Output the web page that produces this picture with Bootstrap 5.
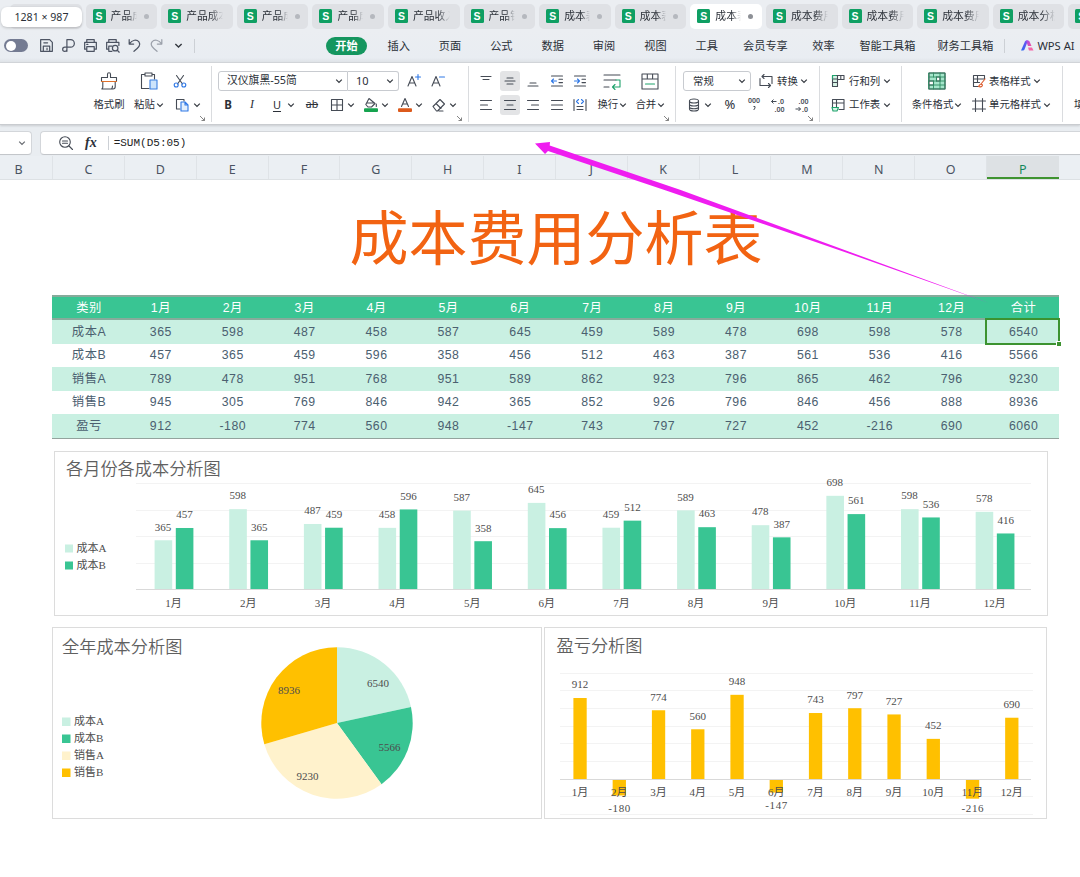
<!DOCTYPE html>
<html lang="zh-CN">
<head>
<meta charset="utf-8">
<meta name="viewport" content="width=device-width, initial-scale=1">
<title>成本费用分析表</title>
<link href="https://cdn.jsdelivr.net/npm/bootstrap@5.3.0/dist/css/bootstrap.min.css" rel="stylesheet">
<style>
  body { font-family: "Noto Sans", "Noto Sans CJK SC", sans-serif; font-size: 10.4px; line-height: 1; color: #2b3038; width: 1080px; height: 877px; overflow: hidden; background: #fff; }
  svg { display: block; flex: none; overflow: visible; }
  .ic { width: 16px; height: 16px; fill: none; stroke: #454b55; stroke-width: 1.1; stroke-linecap: round; stroke-linejoin: round; }
  .ic.big { width: 20px; height: 20px; }
  .quick .ic { stroke: #4d5463; stroke-width: 1.15; width: 17px; height: 17px; }
  .chev { width: 8px; height: 8px; fill: none; stroke: #33383f; stroke-width: 1.2; flex: none; }
  /* file tabs */
  .tabstrip { height: 30px; background: #ebeef2; padding: 4px 0 2px 10px; gap: 4px; }
  .doc { width: 71.6px; height: 24.5px; border-radius: 5px; background: #dfe1e5; padding-left: 7px; flex: none; font-size: 10.8px; }
  .doc.on { background: #fff; }
  .doc .mark-s { width: 13px; height: 14px; border-radius: 1.5px; background: #0f9f63; color: #fff; font: bold 10.5px/14px "Liberation Sans", sans-serif; text-align: center; flex: none; }
  .doc .name { width: 37px; margin-left: 5px; height: 16px; line-height: 15px; overflow: hidden; white-space: nowrap; -webkit-mask-image: linear-gradient(90deg, #000 65%, transparent 100%); mask-image: linear-gradient(90deg, #000 65%, transparent 100%); }
  .doc.mod .name { width: 26px; }
  .doc .pip { width: 5px; height: 5px; border-radius: 50%; background: #b5b8be; margin-left: 7px; }
  .doc.on .pip { background: #8d9096; }
  .sizetip { left: 1px; top: 7px; width: 81px; height: 20px; border-radius: 6px; background: #fff; box-shadow: 0 1px 3px #0003; font-size: 10.6px; z-index: 3; }
  /* menu */
  .menubar { height: 33px; background: linear-gradient(#ebeef2, #e9edf2 28px, #dfe3e7); font-size: 11.2px; border-bottom: 1px solid #d3d6da; padding-bottom: 1px; }
  .switcher { width: 24px; height: 13px; border-radius: 7px; background: #747b92; padding: 1.5px; margin-left: 4px; margin-right: 10px; }
  .switcher i { width: 10px; height: 10px; border-radius: 50%; background: #fff; display: block; }
  .quick { gap: 5px; }
  .quick .chev { margin: 0 4px; width: 9px; height: 9px; }
  .vr1 { width: 1px; height: 14px; background: #ccd0d5; }
  .home { width: 41px; height: 18px; border-radius: 9px; background: #15965f; color: #fff; font-weight: 600; margin-left: 131px; }
  .mi { width: 51.35px; text-align: center; white-space: nowrap; flex: none; }
  .mi.w66 { width: 66px; } .mi.w50 { width: 50px; } .mi.w78 { width: 78px; }
  /* ribbon */
  .ribbon { height: 62px; background: #fff; border-bottom: 1px solid #c9ccd0; box-shadow: 0 1px 2px #0002; position: relative; overflow: hidden; }
  .grp { border-right: 1px solid #dadcdf; height: 56px; margin-top: 3px; flex: none; position: relative; box-sizing: border-box; padding-top: 3px; }
  .grp.a { width: 212px; } .grp.b { width: 257px; } .grp.c { width: 207px; } .grp.d { width: 144px; } .grp.e { width: 82px; } .grp.f { width: 161px; } .grp.g { border: 0; padding-left: 11px; }
  .ln { height: 23.7px; display: flex; align-items: center; white-space: nowrap; }
  .corner { width: 5px; height: 5px; right: 6px; bottom: 1px; fill: none; stroke: #777; stroke-width: .9; }
  .g2 { margin-left: 2px; } .g3 { margin-left: 3px; } .g5 { margin-left: 5px; } .g6 { margin-left: 6px; } .g7 { margin-left: 7px; } .g8 { margin-left: 8px; } .g9 { margin-left: 9px; } .g10 { margin-left: 10px; } .g89 { margin-left: 89px; }
  .s16, .s20, .s22, .s30, .s40, .s50 { display: flex; justify-content: center; align-items: center; flex: none; }
  .s16 { width: 16px; } .s20 { width: 20px; height: 20px; } .s22 { width: 22px; } .s30 { width: 30px; } .s40 { width: 40px; } .s50 { width: 50px; }
  .s30 .chev, .s40 .chev, .s50 .chev { margin-left: 1px; }
  .s20.press { background: #e3e4e6; border-radius: 3px; }
  .aligns { gap: 3.6px; margin-left: 7px; }
  .pick { height: 20px; border: 1px solid #c8cbd0; border-radius: 3px; padding: 0 4px 0 8px; }
  .pick.fam { width: 130px; border-radius: 3px 0 0 3px; font-size: 10.8px; } .pick.siz { width: 51px; border-left: 0; border-radius: 0 3px 3px 0; font-size: 11px; } .pick.num { width: 68px; padding-left: 9px; }
  .tB { font: bold 11.5px "Noto Sans", sans-serif; } .tI { font: italic 12px "Liberation Serif", serif; } .tU { font-size: 11px; text-decoration: underline; text-underline-offset: 2px; } .tS { font-size: 10.5px; text-decoration: line-through; }
  .pct { font-size: 13px; }
  .deci { font-family: "Noto Sans", "DejaVu Sans", sans-serif; font-size: 7px; font-weight: 600; fill: #454b55; }
  /* formula bar and headings */
  .fbar { height: 31px; background: #e9edf1; padding-top: 6px; }
  .fbox { height: 24px; background: #fff; border: 1px solid #d3d6da; border-bottom-color: #c3c6ca; }
  .fbox.nm { width: 32px; border-left: 0; border-radius: 0 4px 4px 0; padding-right: 5px; margin-right: 8px; }
  .fbox.tx { border-radius: 4px 0 0 4px; border-right: 0; padding-left: 17px; padding-bottom: 1px; }
  .fxm { font: italic bold 14px "Liberation Serif", serif; margin: 0 11px 0 11px; }
  .formula { font: 11px "Liberation Mono", monospace; color: #222; margin-left: 5px; }
  .heads { height: 24px; background: #ebeff3; border-bottom: 1px solid #dde1e4; font: 12.5px/27px "Noto Sans", sans-serif; color: #4a5362; overflow: hidden; }
  .heads span { width: 71.85px; flex: none; text-align: center; border-right: 1px solid #dfe3e7; }
  .heads .hb { width: 53px; padding-right: 15px; }
  .heads .cur { background: #dde1e4; color: #13875a; border-bottom: 2px solid #3f9330; border-right: 0; }
  /* sheet */
  .headline { height: 115px; width: 1112px; font-size: 59px; line-height: 109px; color: #f26312; text-align: center; font-family: "Noto Sans CJK SC", sans-serif; margin: 0; font-weight: 400; }
  .costs { width: 1006.5px; margin-left: 52.3px; table-layout: fixed; border-collapse: separate; border-spacing: 0; font: 12.3px/1 "Liberation Sans", "Noto Sans CJK SC", sans-serif; letter-spacing: .5px; text-align: center; color: #4b6070; border-bottom: 1.5px solid #93a39d; }
  .costs td, .costs th { padding: 0 0 0 1.5px; height: 23.5px; font-weight: 400; position: relative; }
  .costs th { background: #39c593; color: #fff; height: 25px; border-top: 2px solid #86ab9b; border-bottom: 2px solid #86ab9b; padding-top: 1.5px; }
  .costs tbody tr:nth-child(odd) td { background: #c9f0e2; }
  .sel { position: absolute; inset: -2px -1px -1px -2px; border: 2.5px solid #3c9330; }
  .sel::after { content: ""; position: absolute; right: -4px; bottom: -4px; width: 4px; height: 4px; background: #3c9330; border: 1px solid #fff; box-sizing: content-box; }
  .chartbox { border: 1px solid #dcdcdc; background: #fff; box-sizing: border-box; }
  .chartbox svg { margin: -1px; }
  .c1 { width: 994px; height: 165px; margin: -427px 0 0 54px; margin-top: 12px; }
  .c2 { width: 490px; height: 192px; }
  .c3 { width: 503px; height: 192px; }
  .pair { margin: 11px 0 0 52.4px; gap: 1.6px; }
  .chartbox text { font: 11px "Liberation Serif", "Noto Sans CJK SC", serif; fill: #4d4d4d; }
  .chartbox text.ttl { font: 350 17.2px "Noto Sans CJK SC", sans-serif; fill: #606060; }
  main { height: 697px; display: flex; flex-direction: column; align-items: flex-start; }
  .costwrap { height: 258px; flex: none; overflow: visible; }
  .pointer { left: 0; top: 0; pointer-events: none; z-index: 5; }
</style>
</head>
<body>
<svg width="0" height="0" class="position-absolute">
  <defs>
    <symbol id="chev" viewBox="0 0 8 8"><path d="M1.200 2.600 4 5.400 6.800 2.600"/></symbol>
    <symbol id="corner" viewBox="0 0 5 5"><path d="M0 0 4.500 4.500M1.500 4.500h3v-3"/></symbol>
    <symbol id="save" viewBox="0 0 16 16"><path d="M2.500 2.500H11l2.500 2.500v8.500h-11zM5 13.500V8.500h6v5M5.500 5.500h3.500M8.500 10.500v1.500"/></symbol>
    <symbol id="outp" viewBox="0 0 16 16"><path d="M6.500 13.500v-11h3.500a3.500 3.500 0 0 1 0 7H4.500a2 2 0 1 0 2 2"/></symbol>
    <symbol id="print" viewBox="0 0 16 16"><path d="M4.500 5V2.500h7V5M4.500 11.500h-2V5h11v6.500h-2M4.500 9h7v4.500h-7zM4.500 7h1"/></symbol>
    <symbol id="preview" viewBox="0 0 16 16"><path d="M4.500 5V2.500h7V5M4.500 11.500h-2V5h11.500v3M4.500 13.500V8.500h3M4.500 13.500h3"/><circle cx="10.500" cy="10.500" r="2.600"/><path d="m12.500 12.500 1.800 1.800"/></symbol>
    <symbol id="undo" viewBox="0 0 16 16"><path d="M3 2.500v4.200h4.200M3.300 6.300C6 2.500 10 2 12.200 4.500c2.200 3-.5 5.500-4.700 9"/></symbol>
    <symbol id="brush" viewBox="0 0 20 20"><path d="M8.500 6.500V3.200a1.500 1.500 0 0 1 3 0v3.300h6v4h-15v-4zM3.800 11v5c0 1-.3 1.500-1 2H14c1.500 0 2.200-1 2.200-2.200V11M12.500 18c.8-.7 1-1.800 1-3"/><path d="M2.500 10.500h15" stroke="#e0702c"/></symbol>
    <symbol id="paste" viewBox="0 0 20 20"><path d="M6 3.500H2.500v14H10M13 3.500h2.500V8M6 2h7v3H6z"/><path d="M11 9h7v9h-7z" fill="#cde4fb" stroke="#3b7fe0"/></symbol>
    <symbol id="cut" viewBox="0 0 16 16"><path d="m4.500 2.500 6 8.500M11.500 2.500l-6 8.500"/><circle cx="4.200" cy="12" r="2" stroke="#2f78e6"/><circle cx="11.800" cy="12" r="2" stroke="#2f78e6"/></symbol>
    <symbol id="copy" viewBox="0 0 16 16"><path d="M6 12H2.500V2.500H10V4"/><path d="M7 5h4l3 3v6H7zM11 5v3h3" stroke="#2f78e6" fill="#e3effd"/></symbol>
    <symbol id="grid" viewBox="0 0 16 16"><path d="M2.500 2.500h11v11h-11zM8 2.500v11M2.500 8h11"/></symbol>
    <symbol id="fill" viewBox="0 0 16 16"><path d="M6 1.500 12 6.500 8.500 10H5L2.800 7.500zM4 6h7.500M13.300 7v2.500"/><rect x="1" y="11.300" width="14" height="3.700" rx="1" fill="#16a34f" stroke="none"/></symbol>
    <symbol id="fcol" viewBox="0 0 16 16"><path d="m4.500 9.500 3.500-8 3.500 8M5.700 7h4.600"/><rect x="1" y="11.300" width="14" height="3.700" rx="1" fill="#dc5a1c" stroke="none"/></symbol>
    <symbol id="erase" viewBox="0 0 16 16"><path d="m2 9.500 7-7 4.500 4.500-7 7H5.500zM5 6.500 10 11.500M8 14h4"/></symbol>
    <symbol id="aup" viewBox="0 0 16 16"><path d="m2 13 4-9.500L10 13M3.500 10h5"/><path d="M9.500 4h5M12 1.500v5" stroke="#2f78e6"/></symbol>
    <symbol id="adn" viewBox="0 0 16 16"><path d="m2 13 4-9.500L10 13M3.500 10h5"/><path d="M9.500 4h5" stroke="#2f78e6"/></symbol>
    <symbol id="vt" viewBox="0 0 16 16"><path d="M3 3.500h10M5 6.500h6"/></symbol>
    <symbol id="vm" viewBox="0 0 16 16"><path d="M5 5h6M3 8h10M5 11h6"/></symbol>
    <symbol id="vb" viewBox="0 0 16 16"><path d="M5 10h6M3 13h10"/></symbol>
    <symbol id="ind1" viewBox="0 0 16 16"><path d="M2.500 3h11M10 6.300h3.500M10 9.600h3.500M2.500 13h11"/><path d="M2.500 8h5M4.500 6l-2 2 2 2" stroke="#2f78e6"/></symbol>
    <symbol id="ind2" viewBox="0 0 16 16"><path d="M2.500 3h11M10 6.300h3.500M10 9.600h3.500M2.500 13h11"/><path d="M2.500 8h5M5.500 6l2 2-2 2" stroke="#2f78e6"/></symbol>
    <symbol id="wrap" viewBox="0 0 20 20"><path d="M2 4h16M2 9h12M2 16h5"/><path d="M14 9h4v7h-7M13 13.500 10.500 16l2.500 2.500" stroke="#1fa36c"/></symbol>
    <symbol id="merge" viewBox="0 0 20 20"><path d="M2 3h16v15H2zM2 8h16M7.300 3v5M12.600 3v5"/><path d="M5.500 13h9" stroke="#1fa36c"/></symbol>
    <symbol id="hl" viewBox="0 0 16 16"><path d="M2.500 3.500h11M2.500 8h7M2.500 12.500h11"/></symbol>
    <symbol id="hc" viewBox="0 0 16 16"><path d="M2.500 3.500h11M5 8h6M2.500 12.500h11"/></symbol>
    <symbol id="hr" viewBox="0 0 16 16"><path d="M2.500 3.500h11M6.500 8h7M2.500 12.500h11"/></symbol>
    <symbol id="hj" viewBox="0 0 16 16"><path d="M2.500 3.500h11M2.500 8h11M2.500 12.500h11"/></symbol>
    <symbol id="hd" viewBox="0 0 16 16"><path d="M2 2.500v11M14 2.500v11M5 9.500h6M5 12.500h6"/><path d="m6.500 2.500-2 2 2 2M9.500 2.500l2 2-2 2" stroke="#2f78e6"/></symbol>
    <symbol id="conv" viewBox="0 0 16 16"><path d="M4 3.500H14v7M2 5.500v7h10M6 1.500l-2 2 2 2M10.500 10.500l2 2-2 2"/></symbol>
    <symbol id="db" viewBox="0 0 16 16"><ellipse cx="8" cy="4" rx="4.500" ry="2"/><path d="M3.500 4v8c0 1.200 2 2 4.500 2s4.500-.8 4.500-2V4M3.500 7c0 1.200 2 2 4.500 2s4.500-.8 4.500-2M3.500 9.800c0 1.200 2 2 4.500 2s4.500-.8 4.500-2"/></symbol>
    <symbol id="rowcol" viewBox="0 0 16 16"><path d="M2.500 2.500h5v11h-5z" fill="#d7f3e6"/><path d="M2.500 6h5M2.500 9.500h5M7.500 2.500h6.500v4H7.500M10.800 2.500v4"/><path d="M2.500 6V2.500h3.500" stroke="#1fa36c"/></symbol>
    <symbol id="wsheet" viewBox="0 0 16 16"><path d="M2.500 10.500v-8H14v10H9M2.500 6H14M6.500 2.500v8"/><path d="M2 10.500h6.500L7 14H3z" stroke="#1fa36c" fill="#d7f3e6"/></symbol>
    <symbol id="cond" viewBox="0 0 20 20"><path d="M2 2h16v16H2z" fill="#a5e6cb"/><path d="M9.500 6H13v4H9.500zM2 10h4.500v4H2z" fill="#fff"/><path d="M2 2h16v16H2zM2 6h16M2 10h16M2 14h16M6.500 2v4M13 2v16M6.500 10v8M9.500 6v4" fill="none" stroke="#2e8c63" stroke-width=".9"/></symbol>
    <symbol id="tsty" viewBox="0 0 16 16"><path d="M7 13.500H2.500v-11h11V6M2.500 6h11M6.500 2.500v7M2.500 9.500h6"/><path d="m14 6-4 5M10 11c-1.500 0-1.500 2-2.500 2.500 2 .8 4 0 4-1.500z" stroke="#dc5a2c"/></symbol>
    <symbol id="csty" viewBox="0 0 16 16"><path d="M4.500 1.500v13M11.500 1.500v13M1.500 4h13M1.500 12h13"/></symbol>
    <symbol id="lens" viewBox="0 0 16 16"><circle cx="7" cy="7" r="5.300"/><path d="m11 11 3.500 3.500M4.500 6h5M4.500 8.300h5"/></symbol>
    <linearGradient id="aiA" x1="0" y1="1" x2="1" y2="0"><stop stop-color="#2a6bf2"/><stop offset="1" stop-color="#7a4df0"/></linearGradient>
    <linearGradient id="aiB" x1="0" y1="0" x2="1" y2="1"><stop stop-color="#a34df0"/><stop offset="1" stop-color="#f0509c"/></linearGradient>
  </defs>
</svg>

<header class="position-relative">
  <div class="sizetip position-absolute d-flex align-items-center justify-content-center">1281 × 987</div>
  <div class="tabstrip d-flex overflow-hidden" id="tabs"></div>

  <nav class="menubar d-flex align-items-center">
    <span class="switcher"><i></i></span>
    <div class="quick d-flex align-items-center">
      <svg class="ic"><use href="#save"/></svg><svg class="ic"><use href="#outp"/></svg><svg class="ic"><use href="#print"/></svg><svg class="ic"><use href="#preview"/></svg><svg class="ic"><use href="#undo"/></svg>
      <svg class="ic opacity-50" viewBox="0 0 16 16"><path d="M13 2.500v4.200H8.800M12.700 6.300C10 2.500 6 2 3.800 4.500c-2.200 3 .5 5.500 4.700 9"/></svg>
      <svg class="chev"><use href="#chev"/></svg>
    </div>
    <span class="vr1 g7"></span>
    <span class="home d-flex align-items-center justify-content-center">开始</span>
    <span class="g6"></span>
    <span class="mi">插入</span><span class="mi">页面</span><span class="mi">公式</span><span class="mi">数据</span><span class="mi">审阅</span><span class="mi">视图</span><span class="mi">工具</span><span class="mi w66">会员专享</span><span class="mi w50">效率</span><span class="mi w78">智能工具箱</span><span class="mi w78">财务工具箱</span>
    <span class="vr1"></span>
    <svg width="13" height="11" viewBox="0 0 13 11" class="ms-3"><path d="M0 10.500 4 1.500Q4.500.5 5.500.5H7L3.500 9.500Q3 10.500 2 10.500z" fill="url(#aiA)"/><path d="M5 .5h2q1 0 1.500 1L10.500 6H7z" fill="url(#aiB)"/><path d="M7 7.500h4l1.500 3H8z" fill="#f566a8"/></svg>
    <span class="g3 text-nowrap">WPS AI</span>
  </nav>

  <section class="ribbon d-flex">
    <div class="grp a">
      <div class="ln"><span class="s40 g89"><svg class="ic big"><use href="#brush"/></svg></span><span class="s40"><svg class="ic big"><use href="#paste"/></svg></span><span class="s22"><svg class="ic"><use href="#cut"/></svg></span></div>
      <div class="ln"><span class="s40 g89">格式刷</span><span class="s40">粘贴<svg class="chev"><use href="#chev"/></svg></span><span class="s22 g2"><svg class="ic"><use href="#copy"/></svg></span><svg class="chev"><use href="#chev"/></svg></div>
      <svg class="corner position-absolute"><use href="#corner"/></svg>
    </div>
    <div class="grp b">
      <div class="ln"><span class="pick fam d-flex align-items-center justify-content-between g6">汉仪旗黑-55简<svg class="chev"><use href="#chev"/></svg></span><span class="pick siz d-flex align-items-center justify-content-between">10<svg class="chev"><use href="#chev"/></svg></span><span class="s16 g7"><svg class="ic"><use href="#aup"/></svg></span><span class="s16 g8"><svg class="ic"><use href="#adn"/></svg></span></div>
      <div class="ln"><span class="s16 g8 tB">B</span><span class="s16 g8 tI">I</span><span class="s16 g9 tU">U</span><svg class="chev g2"><use href="#chev"/></svg><span class="s16 g9 tS">ab</span><svg class="ic g9"><use href="#grid"/></svg><svg class="chev g2"><use href="#chev"/></svg><svg class="ic g8"><use href="#fill"/></svg><svg class="chev g2"><use href="#chev"/></svg><svg class="ic g8"><use href="#fcol"/></svg><svg class="chev g2"><use href="#chev"/></svg><svg class="ic g8"><use href="#erase"/></svg><svg class="chev g2"><use href="#chev"/></svg></div>
      <svg class="corner position-absolute"><use href="#corner"/></svg>
    </div>
    <div class="grp c">
      <div class="ln"><div class="aligns d-flex"><span class="s20"><svg class="ic"><use href="#vt"/></svg></span><span class="s20 press"><svg class="ic"><use href="#vm"/></svg></span><span class="s20"><svg class="ic"><use href="#vb"/></svg></span><span class="s20"><svg class="ic"><use href="#ind1"/></svg></span><span class="s20"><svg class="ic"><use href="#ind2"/></svg></span></div><span class="s30 g7"><svg class="ic big"><use href="#wrap"/></svg></span><span class="s30 g8"><svg class="ic big"><use href="#merge"/></svg></span></div>
      <div class="ln"><div class="aligns d-flex"><span class="s20"><svg class="ic"><use href="#hl"/></svg></span><span class="s20 press"><svg class="ic"><use href="#hc"/></svg></span><span class="s20"><svg class="ic"><use href="#hr"/></svg></span><span class="s20"><svg class="ic"><use href="#hj"/></svg></span><span class="s20"><svg class="ic"><use href="#hd"/></svg></span></div><span class="s30 g7">换行<svg class="chev"><use href="#chev"/></svg></span><span class="s30 g8">合并<svg class="chev"><use href="#chev"/></svg></span></div>
      <svg class="corner position-absolute"><use href="#corner"/></svg>
    </div>
    <div class="grp d">
      <div class="ln"><span class="pick num d-flex align-items-center justify-content-between g7">常规<svg class="chev"><use href="#chev"/></svg></span><svg class="ic g7"><use href="#conv"/></svg><span class="g3">转换</span><svg class="chev g2"><use href="#chev"/></svg></div>
      <div class="ln"><svg class="ic g10"><use href="#db"/></svg><svg class="chev g2"><use href="#chev"/></svg><span class="s16 g10 pct">%</span>
        <svg width="16" height="16" class="g8 deci" viewBox="0 0 16 16"><text x="2" y="6" textLength="12">000</text><path d="M7.500 9.500h1.500v1.500l-1.300 2" stroke="#454b55" fill="none"/></svg>
        <svg width="16" height="16" class="g8 deci" viewBox="0 0 16 16"><path d="M1.500 4.500h5M3.500 2.500l-2 2 2 2" stroke="#454b55" fill="none"/><text x="8" y="7">.0</text><text x="4.500" y="14.500">.00</text></svg>
        <svg width="16" height="16" class="g8 deci" viewBox="0 0 16 16"><text x="4.500" y="6.500">.00</text><path d="M1.500 12h5M4.500 10l2 2-2 2" stroke="#454b55" fill="none"/><text x="8" y="14.500">.0</text></svg>
      </div>
      <svg class="corner position-absolute"><use href="#corner"/></svg>
    </div>
    <div class="grp e">
      <div class="ln"><svg class="ic g10"><use href="#rowcol"/></svg><span class="g3">行和列</span><svg class="chev g3"><use href="#chev"/></svg></div>
      <div class="ln"><svg class="ic g10"><use href="#wsheet"/></svg><span class="g3">工作表</span><svg class="chev g3"><use href="#chev"/></svg></div>
    </div>
    <div class="grp f">
      <div class="ln"><span class="s50 g10"><svg class="ic big"><use href="#cond"/></svg></span><svg class="ic g9"><use href="#tsty"/></svg><span class="g2">表格样式</span><svg class="chev g2"><use href="#chev"/></svg></div>
      <div class="ln"><span class="s50 g10">条件格式<svg class="chev"><use href="#chev"/></svg></span><svg class="ic g9"><use href="#csty"/></svg><span class="g2">单元格样式</span><svg class="chev g2"><use href="#chev"/></svg></div>
    </div>
    <div class="grp g"><div class="ln"></div><div class="ln">填</div></div>
  </section>

  <div class="fbar d-flex">
    <div class="fbox nm d-flex align-items-center justify-content-end"><svg class="chev opacity-75"><use href="#chev"/></svg></div>
    <div class="fbox tx flex-grow-1 d-flex align-items-center"><svg class="ic"><use href="#lens"/></svg><span class="fxm">fx</span><span class="vr1"></span><span class="formula">=SUM(D5:05)</span></div>
  </div>
  <div class="heads d-flex" id="heads"></div>
</header>

<main>
  <h1 class="headline flex-shrink-0">成本费用分析表</h1>
  <table class="costs flex-shrink-0"><thead id="thead"></thead><tbody id="tbody"></tbody></table>
  <div class="chartbox c1 flex-shrink-0"><svg id="monthly" width="994" height="165" viewBox="54 451 994 165"></svg></div>
  <div class="pair d-flex flex-shrink-0">
    <div class="chartbox c2"><svg id="pie" width="490" height="192" viewBox="53 627 490 192"></svg></div>
    <div class="chartbox c3"><svg id="profit" width="503" height="192" viewBox="544 627 503 192"></svg></div>
  </div>
</main>

<svg class="pointer position-absolute" width="1080" height="320"><path d="M535 143.500 550 142 549.700 145.500 680 189.800 850 252 989 303 846 252.500 666 190.500 548 151 545 154z" fill="#ef1df0"/></svg>

<script>
  const months = Array.from({length: 12}, (_, i) => (i + 1) + '月');
  const rows = {
    '成本A': [365,598,487,458,587,645,459,589,478,698,598,578,6540],
    '成本B': [457,365,459,596,358,456,512,463,387,561,536,416,5566],
    '销售A': [789,478,951,768,951,589,862,923,796,865,462,796,9230],
    '销售B': [945,305,769,846,942,365,852,926,796,846,456,888,8936],
    '盈亏':  [912,-180,774,560,948,-147,743,797,727,452,-216,690,6060]
  };
  const el = id => document.getElementById(id);

  const docs = [['',0],['产品成',1],['产品成本',0],['产品成',1],['产品成',1],['产品收入',0],['产品销',1],['成本表',1],['成本表',1],['成本表',1,1],['成本费用',0],['成本费用',0],['成本费用',0],['成本分析',0],['成本',0]];
  el('tabs').innerHTML = docs.map(([n, mod, on]) =>
    `<div class="doc d-flex align-items-center ${mod ? 'mod' : ''} ${on ? 'on' : ''}">${n ? `<span class="mark-s">S</span><span class="name">${n}</span>${mod ? '<span class="pip"></span>' : ''}` : ''}</div>`).join('');

  el('heads').innerHTML = '<span class="hb">B</span>' + [...'CDEFGHIJKLMNOPQ'].map(c => `<span class="${c === 'P' ? 'cur' : ''}">${c === 'Q' ? '' : c}</span>`).join('');

  el('thead').innerHTML = '<tr>' + ['类别', ...months, '合计'].map(t => `<th>${t}</th>`).join('') + '</tr>';
  el('tbody').innerHTML = Object.entries(rows).map(([k, v], r) => `<tr><td>${k}</td>` +
    v.map((n, c) => `<td>${n}${r === 0 && c === 12 ? '<span class="sel"></span>' : ''}</td>`).join('') + '</tr>').join('');

  const T = (x, y, s, a = 'middle') => `<text x="${x}" y="${y + 3.7}" text-anchor="${a}"${/^-/.test(s) ? ' textLength="22"' : ''}>${s}</text>`;
  const R = (x, y, w, h, f) => `<rect x="${x}" y="${y}" width="${w}" height="${h}" fill="${f}"/>`;
  const G = (x1, x2, y, c = '#f3f3f3') => `<path d="M${x1} ${y}H${x2}" stroke="${c}"/>`;
  const mint = '#c9f0e2', green = '#39c593', cream = '#fff2cc', amber = '#ffc000';

  /* monthly cost A against cost B */
  let s = '<text class="ttl" x="66" y="474.500">各月份各成本分析图</text>';
  [483.5, 510.5, 536.5, 563.5].forEach(y => s += G(136, 1031, y));
  months.forEach((m, i) => {
    const c = 173.6 + i * 74.64, a = rows['成本A'][i], b = rows['成本B'][i], k = .1335;
    s += R(c - 19, 589 - a * k, 17.6, a * k, mint) + R(c + 2.2, 589 - b * k, 17.6, b * k, green);
    s += T(c - 10.5, 589 - a * k - 13.4, a) + T(c + 11, 589 - b * k - 13.4, b) + T(c, 603, m);
  });
  s += G(136, 1031, 589.5, '#d9d9d9');
  s += R(65, 544.5, 8, 8, mint) + T(76.5, 548, '成本A', 'start') + R(65, 561.5, 8, 8, green) + T(76.5, 565, '成本B', 'start');
  el('monthly').innerHTML = s;

  /* yearly totals */
  s = '<text class="ttl" x="63" y="652.500">全年成本分析图</text>';
  const parts = [['成本A', mint, 379, 683], ['成本B', green, 390.5, 747], ['销售A', cream, 308.5, 776], ['销售B', amber, 290, 690.5]];
  const total = parts.reduce((t, p) => t + rows[p[0]][12], 0);
  let ang = 0;
  const cx = 338, cy = 723, r = 75.7, pt = t => `${cx + r * Math.sin(t)} ${cy - r * Math.cos(t)}`;
  let labels = '';
  parts.forEach(([k, f, lx, ly], i) => {
    const next = ang + rows[k][12] / total * Math.PI * 2;
    s += `<path d="M${cx} ${cy}L${pt(ang)}A${r} ${r} 0 0 1 ${pt(next)}z" fill="${f}"/>`;
    ang = next;
    labels += T(lx, ly, rows[k][12]) + R(63, 717.5 + i * 17, 8.5, 8.5, f) + T(75, 721 + i * 17, k, 'start');
  });
  el('pie').innerHTML = s + labels;

  /* profit and loss */
  s = '<text class="ttl" x="556.500" y="651.500">盈亏分析图</text>';
  [673.5, 690.5, 708.5, 726.5, 743.5, 761.5, 796.5, 814.5].forEach(y => s += G(560, 1033, y));
  months.forEach((m, i) => {
    const c = 580 + i * 39.25, v = rows['盈亏'][i], h = Math.abs(v) * .0888;
    s += R(c - 6.6, v > 0 ? 779 - h : 779.5, 13.3, h, amber);
    s += T(c, v > 0 ? 779 - h - 13.3 : Math.min(779 + h + 13, 808), v) + T(c, 792, m);
  });
  s += G(560, 1031, 779.5, '#d9d9d9');
  el('profit').innerHTML = s;
</script>
<script src="https://cdn.jsdelivr.net/npm/bootstrap@5.3.0/dist/js/bootstrap.bundle.min.js"></script>
</body>
</html>
